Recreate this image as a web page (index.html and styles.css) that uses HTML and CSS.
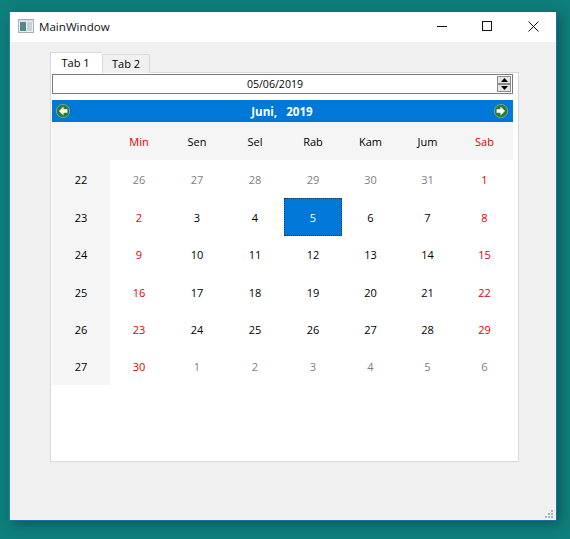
FILE: index.html
```html
<!DOCTYPE html>
<html lang="en">
<head>
  <meta charset="UTF-8">
  <meta name="viewport" content="width=device-width, initial-scale=1.0">
  <title>MainWindow</title>
  <link rel="stylesheet" href="styles.css">
</head>
<body>
  <div class="window">
    <div class="titlebar">
      <svg class="app-icon" width="16" height="16" viewBox="0 0 16 16">
        <rect x="0.5" y="1.5" width="15" height="13" fill="#eef1f1" stroke="#a9aeb0"/>
        <rect x="2" y="4" width="6" height="9" fill="#4f8a88"/>
        <rect x="9" y="4" width="5" height="9" fill="#c5d3d6"/>
        <rect x="1" y="2" width="14" height="1.5" fill="#d6dadb"/>
      </svg>
      <span class="title">MainWindow</span>
      <div class="controls">
        <div class="ctl"><svg width="10" height="10" viewBox="0 0 10 10"><path d="M1 5.5H11" stroke="#111" fill="none"/></svg></div>
        <div class="ctl"><svg width="10" height="10" viewBox="0 0 10 10"><rect x="0.5" y="0.5" width="9" height="9" stroke="#111" fill="none"/></svg></div>
        <div class="ctl"><svg width="11" height="11" viewBox="0 0 11 11"><path d="M0.5 0.5L10.5 10.5M10.5 0.5L0.5 10.5" stroke="#111" fill="none"/></svg></div>
      </div>
    </div>
    <div class="client">
      <div class="tabs">
        <div class="tab active">Tab 1</div>
        <div class="tab">Tab 2</div>
      </div>
      <div class="pane">
        <div class="datebox">
          <span class="datetext">05/06/2019</span>
          <div class="spin">
            <div class="spin-btn"><svg width="7" height="4" viewBox="0 0 7 4"><path d="M3.5 0L7 4H0Z" fill="#000"/></svg></div>
            <div class="spin-btn"><svg width="7" height="4" viewBox="0 0 7 4"><path d="M0 0H7L3.5 4Z" fill="#000"/></svg></div>
          </div>
        </div>
        <div class="calnav">
          <svg class="nav-icon" width="14" height="14" viewBox="0 0 14 14">
            <circle cx="7" cy="7" r="6.7" fill="#2f7d32" stroke="#a5c8a6" stroke-width="0.6"/>
            <path d="M7.5 2.6L3 7L7.5 11.4V8.8H11.4V5.2H7.5Z" fill="#fff"/>
          </svg>
          <span class="month">Juni,&nbsp;&nbsp; 2019</span>
          <svg class="nav-icon" width="14" height="14" viewBox="0 0 14 14">
            <circle cx="7" cy="7" r="6.7" fill="#2f7d32" stroke="#a5c8a6" stroke-width="0.6"/>
            <path d="M6.5 2.6L11 7L6.5 11.4V8.8H2.6V5.2H6.5Z" fill="#fff"/>
          </svg>
        </div>
        <div class="cal">
          <div class="cell head"></div>
          <div class="cell head red">Min</div><div class="cell head">Sen</div><div class="cell head">Sel</div><div class="cell head">Rab</div><div class="cell head">Kam</div><div class="cell head">Jum</div><div class="cell head red">Sab</div>

          <div class="cell week">22</div>
          <div class="cell dim">26</div><div class="cell dim">27</div><div class="cell dim">28</div><div class="cell dim">29</div><div class="cell dim">30</div><div class="cell dim">31</div><div class="cell red">1</div>

          <div class="cell week">23</div>
          <div class="cell red">2</div><div class="cell">3</div><div class="cell">4</div><div class="cell selected">5</div><div class="cell">6</div><div class="cell">7</div><div class="cell red">8</div>

          <div class="cell week">24</div>
          <div class="cell red">9</div><div class="cell">10</div><div class="cell">11</div><div class="cell">12</div><div class="cell">13</div><div class="cell">14</div><div class="cell red">15</div>

          <div class="cell week">25</div>
          <div class="cell red">16</div><div class="cell">17</div><div class="cell">18</div><div class="cell">19</div><div class="cell">20</div><div class="cell">21</div><div class="cell red">22</div>

          <div class="cell week">26</div>
          <div class="cell red">23</div><div class="cell">24</div><div class="cell">25</div><div class="cell">26</div><div class="cell">27</div><div class="cell">28</div><div class="cell red">29</div>

          <div class="cell week">27</div>
          <div class="cell red">30</div><div class="cell dim">1</div><div class="cell dim">2</div><div class="cell dim">3</div><div class="cell dim">4</div><div class="cell dim">5</div><div class="cell dim">6</div>
        </div>
      </div>
      <svg class="grip" width="10" height="10" viewBox="0 0 10 10" fill="#b4b4b8">
        <rect x="7" y="1" width="2" height="2"/>
        <rect x="4" y="4" width="2" height="2"/><rect x="7" y="4" width="2" height="2"/>
        <rect x="1" y="7" width="2" height="2"/><rect x="4" y="7" width="2" height="2"/><rect x="7" y="7" width="2" height="2"/>
      </svg>
    </div>
  </div>
</body>
</html>
```

FILE: styles.css
```css
html, body {
  margin: 0;
  padding: 0;
}
body {
  width: 570px;
  height: 539px;
  overflow: hidden;
  background-color: #0f7f7b;
  font-family: "Open Sans", "Noto Sans", sans-serif;
  font-size: 11px;
  color: #000;
  padding: 12px 0 0 10px;
  box-sizing: border-box;
}
.window {
  width: 547px;
  height: 509px;
  box-sizing: border-box;
  display: flex;
  flex-direction: column;
  background-color: #f0f0f0;
  border-right: 1px solid #1c6f9f;
  border-bottom: 1px solid #1c6f9f;
  box-shadow: -1px 0 0 #1c84b0, 3px 3px 12px rgba(0, 40, 50, 0.45);
}
.titlebar {
  height: 30px;
  flex: none;
  display: flex;
  align-items: center;
  background-color: #fff;
  padding-left: 8px;
}
.app-icon {
  margin-top: -3px;
}
.title {
  margin-left: 5px;
  margin-top: -2px;
  font-size: 11.6px;
  color: #111;
}
.controls {
  margin-left: auto;
  display: flex;
}
.ctl {
  width: 46px;
  height: 30px;
  display: flex;
  align-items: center;
  justify-content: center;
  margin-top: -2px;
}
.ctl svg {
  overflow: visible;
}
.client {
  flex: 1;
  position: relative;
  padding: 10px 0 0 40px;
}
.tabs {
  display: flex;
  align-items: flex-end;
  height: 21px;
  margin-bottom: -1px;
  position: relative;
}
.tab {
  width: 48px;
  height: 19px;
  box-sizing: border-box;
  border: 1px solid #d9d9d9;
  border-bottom: none;
  background-color: #f0f0f0;
  text-align: center;
  line-height: 17px;
}
.tab.active {
  width: 52px;
  height: 21px;
  background-color: #fff;
  line-height: 19px;
  padding-right: 2px;
  border-right: none;
}
.pane {
  width: 469px;
  height: 390px;
  box-sizing: border-box;
  background-color: #fff;
  border: 1px solid #d9d9d9;
  padding: 1px 5px 0 1px;
}
.datebox {
  height: 20px;
  box-sizing: border-box;
  border: 1px solid #7a7a7a;
  display: flex;
  align-items: center;
  position: relative;
}
.datetext {
  flex: 1;
  text-align: center;
  margin-top: -1px;
  font-size: 10.6px;
}
.spin {
  width: 14px;
  height: 16px;
  margin-right: 1px;
  display: flex;
  flex-direction: column;
}
.spin-btn {
  flex: 1;
  display: flex;
  align-items: center;
  justify-content: center;
  background-color: #e6e6e6;
  border: 1px solid #8a8a8a;
  box-sizing: border-box;
}
.calnav {
  height: 22px;
  margin-top: 6px;
  background-color: #0078d7;
  display: flex;
  align-items: center;
  justify-content: space-between;
  padding: 0 5px 0 4px;
  color: #fff;
  font-weight: 700;
  font-size: 11.6px;
}
.nav-icon {
  flex: none;
}
.cal {
  display: grid;
  grid-template-columns: repeat(5, 58px) repeat(3, 57px);
  grid-template-rows: 38px 38px 38px 37px 38px 37px 37px;
}
.cell {
  display: flex;
  align-items: center;
  justify-content: center;
}
.head {
  background-color: #f5f5f5;
}
.week {
  background-color: #f5f5f5;
}
.red {
  color: #e00000;
}
.dim {
  color: #808080;
}
.selected {
  background-color: #0078d7;
  color: #fff;
  outline: 1px dotted #333;
  outline-offset: -1px;
}
.grip {
  position: absolute;
  right: 2px;
  bottom: 1px;
}
```
